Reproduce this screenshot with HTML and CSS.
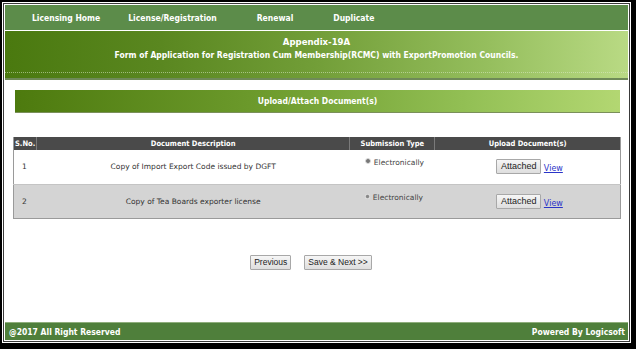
FILE: index.html
```html
<!DOCTYPE html>
<html>
<head>
<meta charset="utf-8">
<link rel="stylesheet" href="styles.css">
</head>
<body>
<div class="frame">
  <div class="page">
    <nav class="nav">
      <a class="nav-item">Licensing Home</a>
      <a class="nav-item">License/Registration</a>
      <a class="nav-item">Renewal</a>
      <a class="nav-item">Duplicate</a>
    </nav>
    <header class="title-band">
      <div class="title">Appendix-19A</div>
      <div class="subtitle">Form of Application for Registration Cum Membership(RCMC) with ExportPromotion Councils.</div>
    </header>
    <main class="main">
      <div class="section-band">Upload/Attach Document(s)</div>
      <table class="docs">
        <thead>
          <tr>
            <th class="c-no">S.No.</th>
            <th class="c-desc">Document Description</th>
            <th class="c-type">Submission Type</th>
            <th class="c-up">Upload Document(s)</th>
          </tr>
        </thead>
        <tbody>
          <tr class="row-odd">
            <td class="c-no">1</td>
            <td class="c-desc">Copy of Import Export Code issued by DGFT</td>
            <td class="c-type"><span class="radio"></span>Electronically</td>
            <td class="c-up"><button class="btn">Attached</button> <a class="link">View</a></td>
          </tr>
          <tr class="row-even">
            <td class="c-no">2</td>
            <td class="c-desc">Copy of Tea Boards exporter license</td>
            <td class="c-type"><span class="radio small"></span>Electronically</td>
            <td class="c-up"><button class="btn">Attached</button> <a class="link">View</a></td>
          </tr>
        </tbody>
      </table>
      <div class="actions">
        <button class="btn">Previous</button>
        <button class="btn">Save &amp; Next &gt;&gt;</button>
      </div>
    </main>
    <footer class="footer">
      <span>@2017 All Right Reserved</span>
      <span>Powered By Logicsoft</span>
    </footer>
  </div>
</div>
</body>
</html>
```
FILE: styles.css
```css
* { box-sizing: border-box; }
html, body { margin: 0; padding: 0; background: #fff; }
body { width: 636px; height: 349px; overflow: hidden; font-family: "DejaVu Sans", Verdana, sans-serif; }

.frame {
  width: 636px;
  height: 349px;
  border: 2px solid #000;
  border-right-width: 5px;
  border-bottom-width: 6px;
  padding: 1px;
  background: #fff;
}
.page {
  height: 100%;
  border: 1px solid #3a3a3a;
  padding: 1px;
  display: flex;
  flex-direction: column;
}

.nav {
  height: 25px;
  background: #5c8c4a;
  display: flex;
  align-items: center;
  padding-left: 27px;
  gap: 28px;
  font-family: "DejaVu Sans Condensed", "DejaVu Sans", sans-serif;
  font-stretch: condensed;
  font-weight: bold;
  font-size: 8.5px;
  color: #fff;
}
.nav-item { color: #fff; text-decoration: none; }
.nav-item:nth-child(2) { margin-right: 12px; }
.nav-item:nth-child(3) { margin-right: 12px; }

.title-band {
  margin-top: 1px;
  height: 49px;
  background: linear-gradient(to right, #4a790f 0%, #5a8720 25%, #729e38 50%, #96bf5e 78%, #b9da84 100%);
  border-bottom: 2px solid #6f8a58;
  color: #fff;
  font-family: "DejaVu Sans Condensed", "DejaVu Sans", sans-serif;
  font-stretch: condensed;
  font-weight: bold;
  text-align: center;
  padding-top: 4px;
  position: relative;
}
.title { font-size: 9.5px; line-height: 13px; }
.subtitle { font-size: 8.5px; line-height: 13px; margin-top: 1px; }
.title-band::after {
  content: "";
  position: absolute;
  left: 0; right: 0; bottom: 5px;
  border-bottom: 1px dotted rgba(220, 235, 200, 0.55);
}

.main {
  flex: 1;
  display: flex;
  flex-direction: column;
  padding: 10px 7px 0 8px;
}

.section-band {
  height: 23px;
  margin: 0 1px 0 2px;
  background: linear-gradient(to right, #4d7a0e 0%, #6c9a2c 40%, #93c055 75%, #b3d772 100%);
  color: #fff;
  font-family: "DejaVu Sans Condensed", "DejaVu Sans", sans-serif;
  font-stretch: condensed;
  font-weight: bold;
  font-size: 8.5px;
  display: flex;
  align-items: center;
  justify-content: center;
  border-bottom: 1px solid #7a8f5a;
}

.docs {
  margin-top: 24px;
  width: 608px;
  border-collapse: collapse;
  border: 1px solid #9a9a9a;
  border-top: none;
  font-size: 7.5px;
  color: #333;
}
.docs th {
  background: #4a4a4a;
  color: #fff;
  height: 13px;
  padding: 0;
  font-family: "DejaVu Sans Condensed", "DejaVu Sans", sans-serif;
  font-stretch: condensed;
  font-weight: bold;
  font-size: 7.5px;
  border-left: 1px solid #7a7a7a;
}
.docs th:first-child { border-left: none; text-align: left; padding-left: 1px; }
.docs td { padding: 0; height: 34px; vertical-align: middle; }
.c-no { width: 23px; }
.c-desc { width: 314px; text-align: center; }
.c-type { width: 85px; }
.c-up { width: 186px; text-align: center; }
td.c-no { padding-left: 8px !important; }
td.c-type { vertical-align: top !important; padding: 8px 0 0 15px !important; color: #444; }
td.c-up { padding: 0 0 0 4px !important; }
.row-odd td { background: #fff; border-bottom: 1px solid #c4c4c4; }
.row-even td { background: #d4d4d4; }

.radio {
  display: inline-block;
  width: 6px;
  height: 6px;
  border-radius: 50%;
  background: radial-gradient(circle, #777 0 1.5px, #bbb 2px, #e8e8e8 3px);
  margin-right: 3px;
  vertical-align: 1px;
}
.radio.small { width: 5px; height: 5px; background: radial-gradient(circle, #888 0 1.2px, #ccc 2px, #eee 2.5px); }

.btn {
  font-family: "Liberation Sans", Arial, sans-serif;
  font-size: 9px;
  color: #222;
  height: 15px;
  padding: 0 4px;
  border: 1px solid #a8a8a8;
  border-radius: 1px;
  background: linear-gradient(#f6f6f6, #dedede);
  line-height: 13px;
}
.link {
  color: #2a35c8;
  text-decoration: underline;
  font-size: 8px;
  vertical-align: -2px;
}

.actions {
  margin-top: 36px;
  display: flex;
  justify-content: center;
  gap: 13px;
  padding-right: 12px;
}
.actions .btn { padding: 0 3px; font-size: 8.5px; }

.footer {
  height: 18px;
  background: #4f7f3b;
  color: #fff;
  font-family: "DejaVu Sans Condensed", "DejaVu Sans", sans-serif;
  font-stretch: condensed;
  font-weight: bold;
  font-size: 8.5px;
  display: flex;
  align-items: center;
  justify-content: space-between;
  padding: 0 3px 0 4px;
  border-top: 1px solid #8fae7c;
}
```
